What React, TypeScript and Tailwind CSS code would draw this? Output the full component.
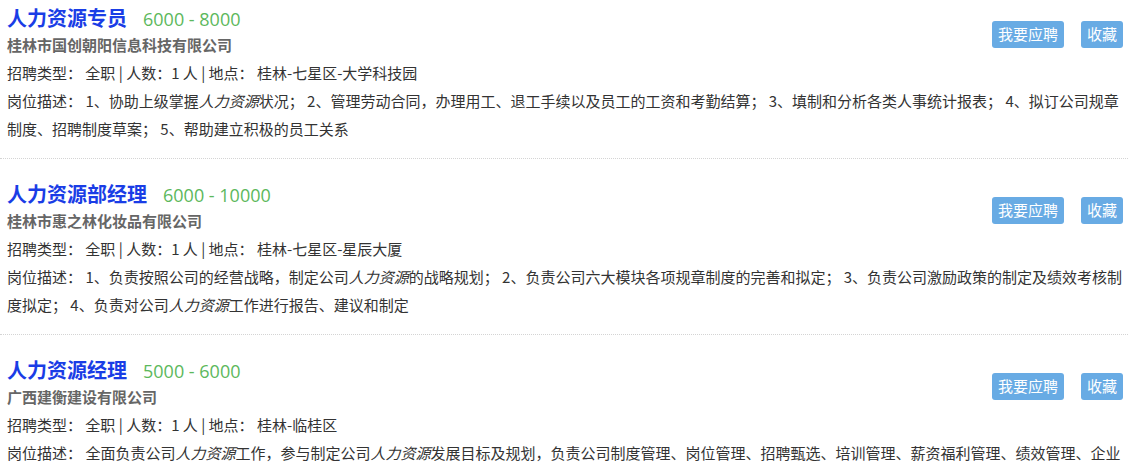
import { FC, ReactNode } from 'react';

interface Job {
  title: string;
  salary: string;
  company: string;
  place: string;
  desc: ReactNode;
}

const Kw: FC<{ children: ReactNode }> = ({ children }) => <em className="italic">{children}</em>;

const jobs: Job[] = [
  {
    title: '人力资源专员',
    salary: '6000 - 8000',
    company: '桂林市国创朝阳信息科技有限公司',
    place: '桂林-七星区-大学科技园',
    desc: (
      <>
        1、协助上级掌握<Kw>人力资源</Kw>状况； 2、管理劳动合同，办理用工、退工手续以及员工的工资和考勤结算； 3、填制和分析各类人事统计报表； 4、拟订公司规章制度、招聘制度草案； 5、帮助建立积极的员工关系
      </>
    ),
  },
  {
    title: '人力资源部经理',
    salary: '6000 - 10000',
    company: '桂林市惠之林化妆品有限公司',
    place: '桂林-七星区-星辰大厦',
    desc: (
      <>
        1、负责按照公司的经营战略，制定公司<Kw>人力资源</Kw>的战略规划； 2、负责公司六大模块各项规章制度的完善和拟定； 3、负责公司激励政策的制定及绩效考核制度拟定； 4、负责对公司<Kw>人力资源</Kw>工作进行报告、建议和制定
      </>
    ),
  },
  {
    title: '人力资源经理',
    salary: '5000 - 6000',
    company: '广西建衡建设有限公司',
    place: '桂林-临桂区',
    desc: (
      <>
        全面负责公司<Kw>人力资源</Kw>工作，参与制定公司<Kw>人力资源</Kw>发展目标及规划，负责公司制度管理、岗位管理、招聘甄选、培训管理、薪资福利管理、绩效管理、企业文化建设等工作
      </>
    ),
  },
];

const JobItem: FC<{ job: Job }> = ({ job }) => {
  return (
    <div className="border-b border-dotted border-[#d4d4d4] pl-[7px] pr-[4px] pt-[23px] pb-[15px] first:pt-[6px]">
      <div className="flex items-center justify-between">
        <div>
          <div className="flex items-baseline leading-[24px]">
            <span className="text-[20px] font-bold text-[#1a3de6]">{job.title}</span>
            <span className="ml-[16px] text-[18px] text-[#5cb85c] font-['Open_Sans','Noto_Sans_CJK_SC',sans-serif]">
              {job.salary}
            </span>
          </div>
          <div className="text-[15px] font-bold leading-[28px] text-[#666]">{job.company}</div>
        </div>
        <div className="mt-[4px] mr-[1px] flex gap-[17px]">
          <button className="h-[27px] rounded-[3px] bg-[#68abe4] px-[6px] text-[15px] text-white">我要应聘</button>
          <button className="h-[27px] rounded-[3px] bg-[#68abe4] px-[6px] text-[15px] text-white">收藏</button>
        </div>
      </div>
      <div className="text-[15px] leading-[28px] text-[#333]">
        招聘类型： 全职 | 人数：1 人 | 地点： {job.place}
      </div>
      <div className="text-[15px] leading-[28px] text-[#333]">岗位描述： {job.desc}</div>
    </div>
  );
};

export default function App() {
  return (
    <div className="h-[472px] w-[1128px] overflow-hidden bg-white font-['Noto_Sans_CJK_SC',sans-serif]">
      {jobs.map((job) => (
        <JobItem key={job.title} job={job} />
      ))}
    </div>
  );
}
